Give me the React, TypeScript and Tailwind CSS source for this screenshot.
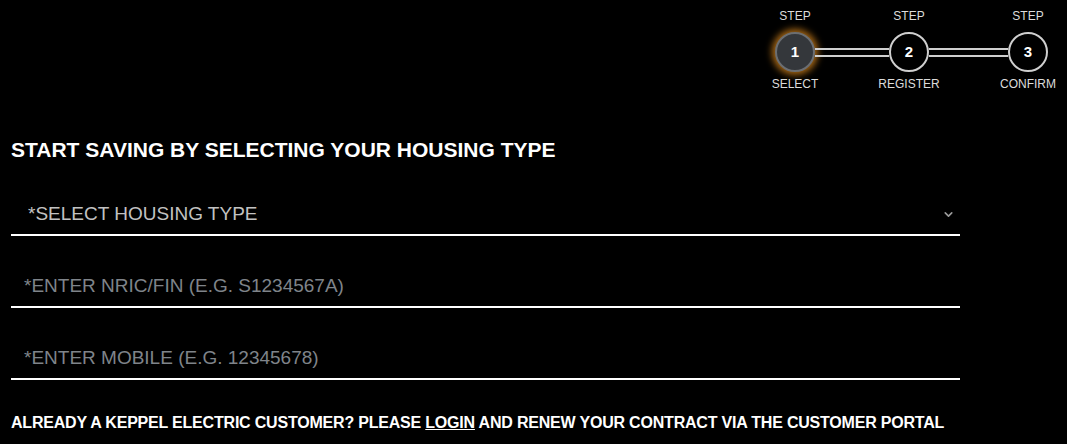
import { ChevronDown } from "lucide-react";

const steps = [
  { n: 1, label: "SELECT", active: true },
  { n: 2, label: "REGISTER" },
  { n: 3, label: "CONFIRM" },
];

const font = "font-['Liberation_Sans',Arial,Helvetica,sans-serif]";

function Step({ n, label, active }: { n: number; label: string; active?: boolean }) {
  return (
    <div className="flex w-10 flex-col items-center">
      <span className="whitespace-nowrap text-[12px] leading-[13px] text-[#dcdcdc]">STEP</span>
      <div
        className={`mt-[9px] flex h-10 w-10 items-center justify-center rounded-full border-2 text-[15px] font-bold text-white ${
          active
            ? "border-[#6b6e72] bg-[#34373b] shadow-[0_0_7px_3px_rgba(226,140,30,0.75)]"
            : "border-[#cfcfcf] bg-black"
        }`}
      >
        {n}
      </div>
      <span className="mt-[5px] whitespace-nowrap text-[12px] leading-[14px] text-[#dcdcdc]">
        {label}
      </span>
    </div>
  );
}

function Connector({ w }: { w: string }) {
  return <div className={`mt-[38px] h-[9px] border-y-2 border-[#cfcfcf] ${w}`} />;
}

export default function App() {
  return (
    <div className={`min-h-[444px] w-full bg-black text-white ${font}`}>
      {/* Steps */}
      <div className="flex justify-end pr-[19px] pt-[10px]">
        <Step {...steps[0]} />
        <Connector w="w-[74px]" />
        <Step {...steps[1]} />
        <Connector w="w-[79px]" />
        <Step {...steps[2]} />
      </div>

      <div className="w-[960px] pl-[11px]">
        <h1 className="mt-[47px] text-[21px] font-bold leading-6 text-white">
          START SAVING BY SELECTING YOUR HOUSING TYPE
        </h1>

        {/* Housing type */}
        <div className="mt-[32px] flex h-[42px] items-center justify-between border-b-2 border-white pl-[17px] pr-[5px]">
          <span className="text-[19px] text-[#c2c2c2]">*SELECT HOUSING TYPE</span>
          <ChevronDown size={13} strokeWidth={3} className="text-[#9a9a9a]" />
        </div>

        <div className="mt-[30px] flex h-[42px] items-center border-b-2 border-white pl-[13px]">
          <span className="text-[19px] text-[#7f848a]">*ENTER NRIC/FIN (E.G. S1234567A)</span>
        </div>

        <div className="mt-[30px] flex h-[42px] items-center border-b-2 border-white pl-[13px]">
          <span className="text-[19px] text-[#7f848a]">*ENTER MOBILE (E.G. 12345678)</span>
        </div>

        <p className="mt-[34px] whitespace-nowrap text-[16px] font-bold leading-[18px] tracking-[-0.2px] text-white">
          ALREADY A KEPPEL ELECTRIC CUSTOMER? PLEASE <span className="underline">LOGIN</span> AND RENEW
          YOUR CONTRACT VIA THE CUSTOMER PORTAL
        </p>
      </div>
    </div>
  );
}
